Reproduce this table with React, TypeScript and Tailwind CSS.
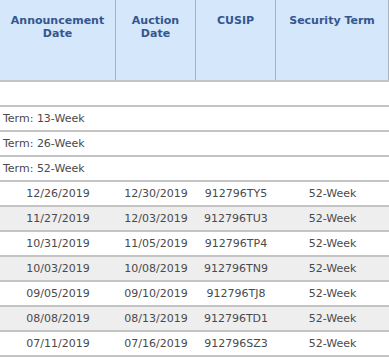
const terms = ["13-Week", "26-Week", "52-Week"];

const rows = [
  ["12/26/2019", "12/30/2019", "912796TY5", "52-Week"],
  ["11/27/2019", "12/03/2019", "912796TU3", "52-Week"],
  ["10/31/2019", "11/05/2019", "912796TP4", "52-Week"],
  ["10/03/2019", "10/08/2019", "912796TN9", "52-Week"],
  ["09/05/2019", "09/10/2019", "912796TJ8", "52-Week"],
  ["08/08/2019", "08/13/2019", "912796TD1", "52-Week"],
  ["07/11/2019", "07/16/2019", "912796SZ3", "52-Week"],
];

const headers = [["Announcement", "Date"], ["Auction", "Date"], ["CUSIP"], ["Security Term"]];

const cols = "grid grid-cols-[116px_80px_80px_1fr]";

export default function App() {
  return (
    <div className="w-[389px] h-[357px] overflow-hidden bg-white font-['DejaVu_Sans',Verdana,sans-serif] text-[11px] text-[#4a4a4a]">
      <div className={`${cols} h-[82px] bg-[#d5e7fb] border-b-2 border-[#c4c4c4]`}>
        {headers.map((h, i) => (
          <div
            key={i}
            className="border-r border-[#a7b3c0] pt-[14px] text-center font-bold leading-[13px] text-[#35558f]"
          >
            {h.map((line) => (
              <div key={line}>{line}</div>
            ))}
          </div>
        ))}
      </div>

      <div className="h-[25px] border-b-2 border-[#c4c4c4]" />

      {terms.map((t) => (
        <div key={t} className="flex h-[25px] items-center border-b-2 border-[#c4c4c4] pl-[3px] pt-[1px]">
          Term: {t}
        </div>
      ))}

      {rows.map((r, i) => (
        <div
          key={r[2]}
          className={`${cols} h-[25px] items-center border-b-2 border-[#c4c4c4] pt-[1px] ${
            i % 2 === 1 ? "bg-[#eeeeee]" : "bg-white"
          }`}
        >
          {r.map((c, j) => (
            <div key={j} className="text-center">
              {c}
            </div>
          ))}
        </div>
      ))}
    </div>
  );
}
